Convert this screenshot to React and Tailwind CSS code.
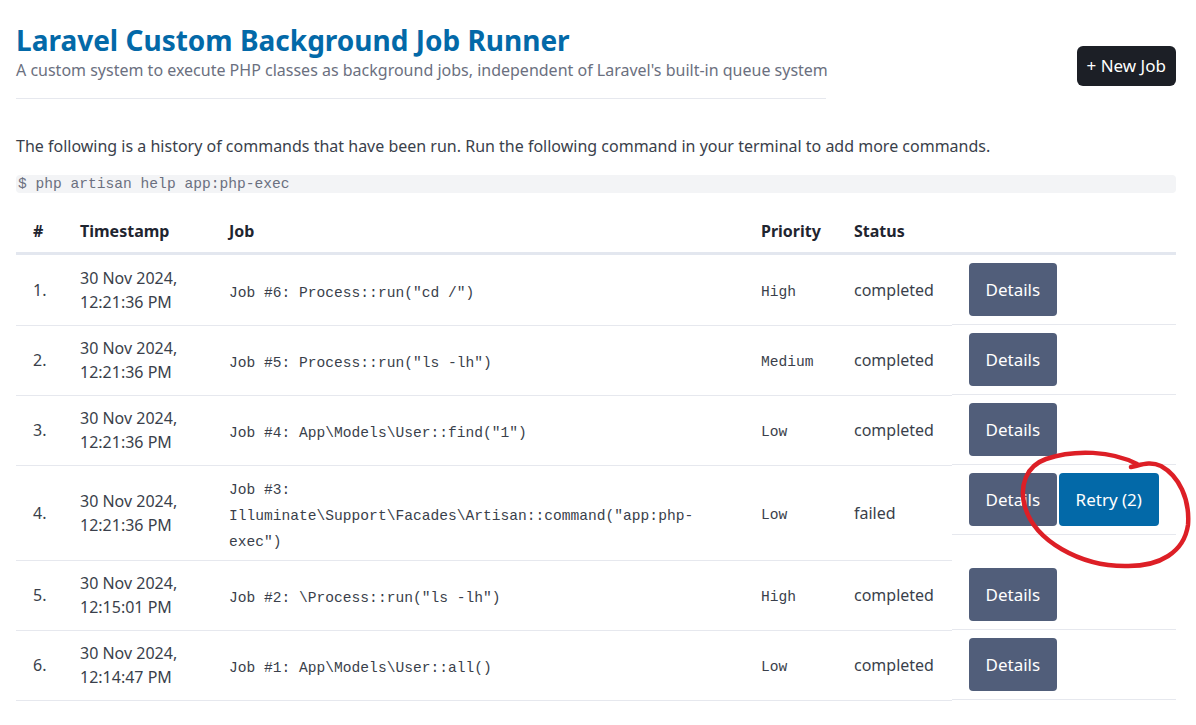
import React from "react";

const jobs = [
  { n: 1, date: "30 Nov 2024,", time: "12:21:36 PM", job: 'Job #6: Process::run("cd /")', priority: "High", status: "completed" },
  { n: 2, date: "30 Nov 2024,", time: "12:21:36 PM", job: 'Job #5: Process::run("ls -lh")', priority: "Medium", status: "completed" },
  { n: 3, date: "30 Nov 2024,", time: "12:21:36 PM", job: 'Job #4: App\\Models\\User::find("1")', priority: "Low", status: "completed" },
  { n: 4, date: "30 Nov 2024,", time: "12:21:36 PM", job: 'Job #3: Illuminate\\Support\\Facades\\Artisan::command("app:php-exec")', priority: "Low", status: "failed", retries: 2 },
  { n: 5, date: "30 Nov 2024,", time: "12:15:01 PM", job: 'Job #2: \\Process::run("ls -lh")', priority: "High", status: "completed" },
  { n: 6, date: "30 Nov 2024,", time: "12:14:47 PM", job: "Job #1: App\\Models\\User::all()", priority: "Low", status: "completed" },
];

const mono = "font-['Liberation_Mono',monospace] text-[14.6px]";

function JobRow({ item }) {
  const cell = "border-b border-[#e6e8ee] px-4 align-middle";
  return (
    <tr>
      <td className={cell + " py-2 pl-[17px]"}>{item.n}.</td>
      <td className={cell + " py-2 leading-6"}>
        {item.date}
        <br />
        {item.time}
      </td>
      <td className={cell + " pt-[11px] pb-[5px] " + mono + " leading-[26px] text-[#3a3f4b] break-words"}>{item.job}</td>
      <td className={cell + " pt-[11px] pb-[5px] " + mono + " text-[#3a3f4b]"}>{item.priority}</td>
      <td className={cell + " py-2"}>{item.status}</td>
      <td className="p-0 align-top">
        <div className="flex gap-[2px] pl-[17px] py-2 border-b border-[#e6e8ee]">
          <button className="h-[53px] px-[16.5px] rounded bg-[#515e7a] text-white text-[17px]">Details</button>
          {item.retries && (
            <button className="h-[53px] px-[17px] rounded bg-[#0369a8] text-white text-[17px]">
              Retry ({item.retries})
            </button>
          )}
        </div>
      </td>
    </tr>
  );
}

export default function App() {
  return (
    <div className="relative min-h-screen bg-white text-[#3a3f4b] font-['Noto_Sans',sans-serif] text-[16px]">
      <div className="pl-4 pr-5 pt-[22px]">
        {/* header */}
        <div className="flex items-start justify-between">
          <div className="w-[810px]">
            <h1 className="text-[28px] leading-9 font-bold text-[#0369a8]">Laravel Custom Background Job Runner</h1>
            <p className="text-[16px] leading-6 text-[#6b7080] whitespace-nowrap">
              A custom system to execute PHP classes as background jobs, independent of Laravel's built-in queue system
            </p>
            <hr className="mt-4 border-t border-[#e6e8ee]" />
          </div>
          <button className="mt-6 h-10 px-[10px] rounded-md bg-[#1c1f26] text-white text-[17px]">+ New Job</button>
        </div>

        <p className="mt-[35px] leading-6">
          The following is a history of commands that have been run. Run the following command in your terminal to add more commands.
        </p>
        <div className={"mt-[17px] bg-[#f3f4f6] rounded px-0.5 leading-[18px] text-[#6b7080] " + mono}>
          $ php artisan help app:php-exec
        </div>

        {/* jobs table */}
        <table className="mt-4 w-[1160px] table-fixed border-collapse text-left">
          <colgroup>
            <col className="w-[48px]" />
            <col className="w-[149px]" />
            <col className="w-[532px]" />
            <col className="w-[93px]" />
            <col className="w-[114px]" />
            <col className="w-[224px]" />
          </colgroup>
          <thead>
            <tr className="text-[#1f2530] font-bold">
              <th className="pt-[10px] pb-[9px] pl-[17px] px-4 border-b-[3px] border-[#e3e7ef] leading-6">#</th>
              <th className="pt-[10px] pb-[9px] px-4 border-b-[3px] border-[#e3e7ef] leading-6">Timestamp</th>
              <th className="pt-[10px] pb-[9px] px-4 border-b-[3px] border-[#e3e7ef] leading-6">Job</th>
              <th className="pt-[10px] pb-[9px] px-4 border-b-[3px] border-[#e3e7ef] leading-6">Priority</th>
              <th className="pt-[10px] pb-[9px] px-4 border-b-[3px] border-[#e3e7ef] leading-6">Status</th>
              <th className="pt-[10px] pb-[9px] px-4 border-b-[3px] border-[#e3e7ef] leading-6"></th>
            </tr>
          </thead>
          <tbody>
            {jobs.map((item) => (
              <JobRow key={item.n} item={item} />
            ))}
          </tbody>
        </table>
      </div>

      {/* hand-drawn annotation */}
      <svg className="absolute left-0 top-0 pointer-events-none" width="1196" height="725">
        <path
          d="M1137,464 C1112,451 1075,449 1046,459 C1026,466 1019,486 1025,507 C1035,541 1080,566 1125,566 C1160,567 1184,552 1188,525 C1190,499 1179,476 1161,466 C1150,461 1141,465 1131,467"
          fill="none"
          stroke="#dd1f26"
          strokeWidth="4.5"
          strokeLinecap="round"
        />
      </svg>
    </div>
  );
}
